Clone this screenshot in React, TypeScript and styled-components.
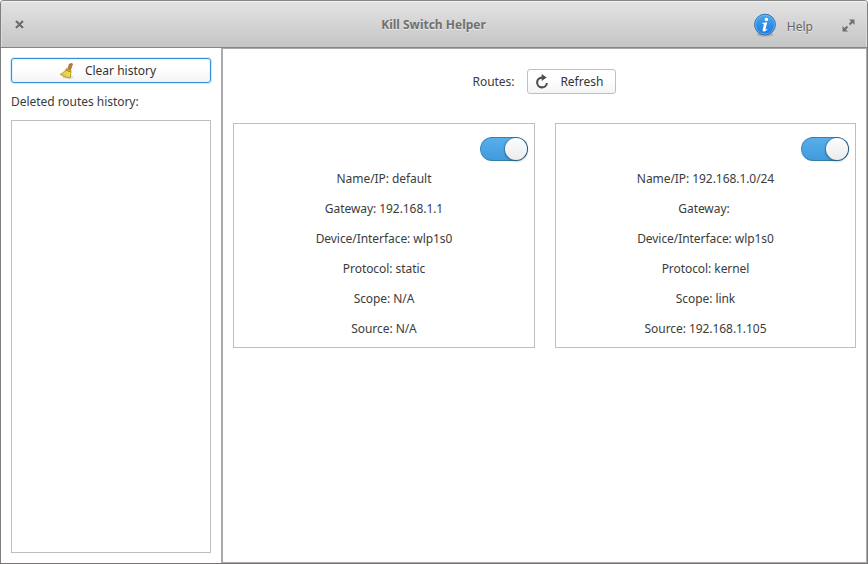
import React from "react";
import styled, { createGlobalStyle } from "styled-components";

const GlobalStyle = createGlobalStyle`
  * { box-sizing: border-box; }
  html, body { margin: 0; padding: 0; background: #fff; }
  body { font-family: "Noto Sans", "Open Sans", sans-serif; font-size: 12px; color: #3c3c3c; }
`;

const Window = styled.div`
  width: 868px;
  height: 564px;
  display: flex;
  flex-direction: column;
  border: 1px solid #7e7e7e;
  border-top-color: #858585;
  border-bottom-color: #757373;
  border-radius: 4px 4px 0 0;
  overflow: hidden;
  background: #fff;
`;

const HeaderBar = styled.header`
  height: 47px;
  flex: none;
  display: grid;
  grid-template-columns: 1fr auto 1fr;
  align-items: center;
  padding: 0 12px 0 11px;
  background: linear-gradient(#e3e3e3, #c5c5c5);
  border-bottom: 1px solid #858585;
  box-shadow: inset 0 1px #f2f2f2, inset 1px 0 #dedede, inset -1px 0 #dedede;
  border-radius: 3px 3px 0 0;
`;

const HeaderButton = styled.button`
  display: flex;
  width: 14px;
  height: 14px;
  padding: 0;
  border: 0;
  background: none;
  align-items: center;
  justify-content: center;
`;

const Title = styled.h1`
  margin: 0;
  padding-top: 1px;
  font-size: 12px;
  line-height: 17px;
  font-weight: 700;
  color: #707070;
  text-shadow: 0 1px rgba(255, 255, 255, 0.6);
`;

const HeaderActions = styled.div`
  display: flex;
  align-items: center;
  justify-content: flex-end;
  padding-top: 2px;
`;

const Help = styled.button`
  display: flex;
  align-items: center;
  gap: 10px;
  margin-right: 28px;
  padding: 0;
  border: 0;
  background: none;
  font: inherit;
  color: #666;
  text-shadow: 0 1px rgba(255, 255, 255, 0.5);
`;

const HelpLabel = styled.span`
  padding-top: 3px;
  line-height: 17px;
`;

const Body = styled.div`
  flex: 1;
  min-height: 0;
  display: flex;
`;

const Sidebar = styled.aside`
  width: 220px;
  padding: 10px 10px 10px;
  display: flex;
  flex-direction: column;
`;

const Button = styled.button<{ $focused?: boolean }>`
  display: flex;
  align-items: center;
  justify-content: center;
  height: 25px;
  flex: none;
  border: 1px solid ${(p) => (p.$focused ? "#3794d3" : "#bfbfbf")};
  border-radius: 3px;
  background: linear-gradient(#fff 40%, #f4f4f4);
  box-shadow: ${(p) => (p.$focused ? "0 0 0 1px #d3eafa, inset 0 0 0 1px #e3f2fc" : "0 1px #fff")};
  font: inherit;
  line-height: 17px;
  color: #333;
  padding: 0 12px 0 6px;
  gap: 10px;
`;

const ClearButton = styled(Button)`
  gap: 10px;
  padding: 0 7px 0 0;
`;

const HistoryLabel = styled.div`
  margin: 10px 0;
  line-height: 17px;
  letter-spacing: -0.04px;
`;

const HistoryList = styled.div`
  flex: 1;
  border: 1px solid #bebebe;
`;

const Main = styled.main`
  flex: 1;
  border: 1px solid #a9a9a9;
  border-left: 2px solid #aaa;
  padding: 20px 10px;
`;

const Toolbar = styled.div`
  display: flex;
  align-items: center;
  justify-content: center;
  gap: 13px;
  margin-bottom: 29px;
`;

const Cards = styled.div`
  display: grid;
  grid-template-columns: 302px 301px;
  gap: 20px;
`;

const Card = styled.section`
  height: 225px;
  border: 1px solid #bebebe;
  padding: 13px 6px 0;
  display: flex;
  flex-direction: column;
`;

const Toggle = styled.div`
  align-self: flex-end;
  display: flex;
  justify-content: flex-end;
  width: 48px;
  height: 24px;
  border: 1px solid #318ac5;
  border-color: #367fb0 #286b9b #347fac #3c8dc7;
  border-radius: 12px;
  background: linear-gradient(#58aeea, #419bdb);
`;

const Knob = styled.div`
  width: 22px;
  height: 22px;
  border-radius: 50%;
  background: linear-gradient(#fdfdfd, #ececec);
  box-shadow: 0 0 0 1px rgba(30, 70, 100, 0.3), 0 1px 2px 1px rgba(0, 0, 0, 0.16);
`;

const Fields = styled.div`
  display: flex;
  flex-direction: column;
  align-items: center;
  gap: 13px;
  padding-top: 9px;
`;

const Field = styled.div`
  line-height: 17px;
  white-space: pre;
  letter-spacing: -0.06px;
`;

const CloseIcon = () => (
  <svg width="9" height="9" viewBox="0 0 9 9">
    <path d="M1 2l7 7M8 2L1 9" stroke="#eee" strokeWidth="1.6" />
    <path d="M1 1l7 7M8 1L1 8" stroke="#6c6c6c" strokeWidth="2.3" />
  </svg>
);

const ExpandIcon = () => (
  <svg width="13" height="13" viewBox="0 0 13 13">
    <path d="M7 0.5h5.5V6l-2-2-2.2 2.2-1.5-1.5L9 2.5z" fill="#707070" />
    <path d="M6 12.5H.5V7l2 2 2.2-2.2 1.5 1.5L4 10.5z" fill="#707070" />
  </svg>
);

const InfoIcon = () => (
  <svg width="24" height="24" viewBox="0 0 24 24">
    <defs>
      <linearGradient id="info" x1="0" y1="0" x2="0" y2="1">
        <stop offset="0" stopColor="#54a9ec" />
        <stop offset=".5" stopColor="#3191e6" />
        <stop offset="1" stopColor="#2478dc" />
      </linearGradient>
    </defs>
    <ellipse cx="12" cy="21.5" rx="8.5" ry="2" fill="#000" opacity=".17" />
    <circle cx="12" cy="11.6" r="10.4" fill="url(#info)" stroke="#286fab" />
    <circle cx="12" cy="11.6" r="9.5" fill="none" stroke="#8bc9f7" strokeOpacity=".55" />
    <circle cx="13.4" cy="6.4" r="1.7" fill="#fff" />
    <path d="M9.5 10l4.7-.7-1.7 6.9c-.2.8.3.7 1.5-.5l.5.6c-1.2 1.5-2.4 2.2-3.6 2.1-1.2 0-1.5-.8-1.2-2l1.3-5.1-1.6-.4z" fill="#fff" />
  </svg>
);

const BroomIcon = () => (
  <svg width="16" height="16" viewBox="0 0 16 16">
    <ellipse cx="9" cy="14.3" rx="5.5" ry="1.3" fill="#000" opacity=".12" />
    <path d="M8.6 6.6L10.4 1Q12 .1 13.6.9L11.4 7.3z" fill="#b88040" stroke="#8c5721" strokeWidth=".6" />
    <path d="M7.4 5.4l4.5 1.7-.1 3.5-.4 4.1c-2.1.3-3.4 0-5.2-.8-2-.7-3.5-1.6-4.9-2.6C4.2 10 6.2 8.2 7.4 5.4z" fill="#e0c737" stroke="#a99115" strokeWidth=".8" />
    <path d="M7.9 8.5l-3.1 3.3M9.3 9l-2 4.3M10.6 9.4l-.8 4.5" stroke="#f9ef8b" strokeWidth=".8" />
    <path d="M7 7l4.8 1.8" stroke="#9a7116" strokeWidth=".9" />
  </svg>
);

const RefreshIcon = () => (
  <svg width="16" height="16" viewBox="0 0 16 16">
    <path d="M9.5 3.6H8A4.9 4.9 0 1 0 12.9 9" fill="none" stroke="#4d4d4d" strokeWidth="2.1" />
    <path d="M7.7 0l4.9 3.6-4.9 3.5z" fill="#4d4d4d" />
  </svg>
);

const routes = [
  ["Name/IP: default", "Gateway: 192.168.1.1", "Device/Interface: wlp1s0", "Protocol: static", "Scope: N/A", "Source: N/A"],
  ["Name/IP: 192.168.1.0/24", "Gateway: ", "Device/Interface: wlp1s0", "Protocol: kernel", "Scope: link", "Source: 192.168.1.105"],
];

export default function App() {
  return (
    <>
      <GlobalStyle />
      <Window>
        <HeaderBar>
          <HeaderButton aria-label="Close"><CloseIcon /></HeaderButton>
          <Title>Kill Switch Helper</Title>
          <HeaderActions>
            <Help><InfoIcon /><HelpLabel>Help</HelpLabel></Help>
            <HeaderButton aria-label="Maximize"><ExpandIcon /></HeaderButton>
          </HeaderActions>
        </HeaderBar>
        <Body>
          <Sidebar>
            <ClearButton $focused><BroomIcon />Clear history</ClearButton>
            <HistoryLabel>Deleted routes history:</HistoryLabel>
            <HistoryList />
          </Sidebar>
          <Main>
            <Toolbar>
              <Field>Routes:</Field>
              <Button><RefreshIcon />Refresh</Button>
            </Toolbar>
            <Cards>
              {routes.map((fields, i) => (
                <Card key={i}>
                  <Toggle role="switch" aria-checked="true"><Knob /></Toggle>
                  <Fields>
                    {fields.map((text) => <Field key={text}>{text}</Field>)}
                  </Fields>
                </Card>
              ))}
            </Cards>
          </Main>
        </Body>
      </Window>
    </>
  );
}
